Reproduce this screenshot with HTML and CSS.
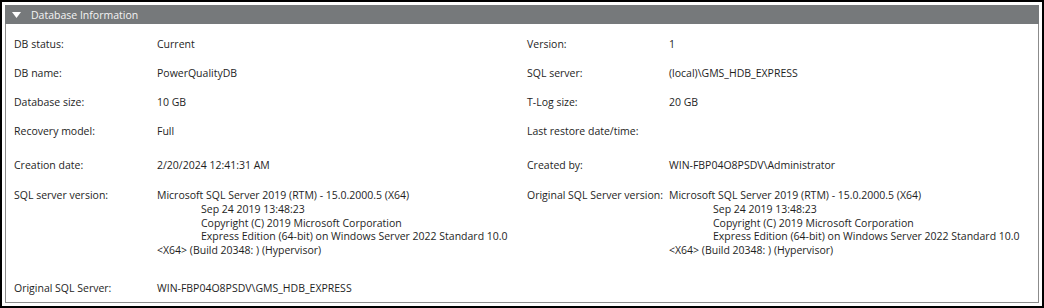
FILE: index.html
```html
<html lang="en">
<head>
    <meta charset="UTF-8">
    <title>Database Information</title>
    <link rel="stylesheet" href="styles.css">
</head>
<body>
    <div class="frame">
        <div class="panel">
            <div class="panel-header">
                <svg class="arrow" width="9" height="6" viewBox="0 0 9 6"><polygon points="0,0 9,0 4.5,6" fill="#ffffff"/></svg>
                <span>Database Information</span>
            </div>
            <div class="info">
                <div class="label">DB status:</div>
                <div class="value">Current</div>
                <div class="label">Version:</div>
                <div class="value">1</div>

                <div class="label">DB name:</div>
                <div class="value">PowerQualityDB</div>
                <div class="label">SQL server:</div>
                <div class="value">(local)\GMS_HDB_EXPRESS</div>

                <div class="label">Database size:</div>
                <div class="value">10 GB</div>
                <div class="label">T-Log size:</div>
                <div class="value">20 GB</div>

                <div class="label">Recovery model:</div>
                <div class="value">Full</div>
                <div class="label">Last restore date/time:</div>
                <div class="value"></div>

                <div class="label">Creation date:</div>
                <div class="value">2/20/2024 12:41:31 AM</div>
                <div class="label">Created by:</div>
                <div class="value">WIN-FBP04O8PSDV\Administrator</div>

                <div class="label">SQL server version:</div>
                <div class="value">
                    <div>Microsoft SQL Server 2019 (RTM) - 15.0.2000.5 (X64)</div>
                    <div class="indent">Sep 24 2019 13:48:23</div>
                    <div class="indent">Copyright (C) 2019 Microsoft Corporation</div>
                    <div class="indent">Express Edition (64-bit) on Windows Server 2022 Standard 10.0</div>
                    <div>&lt;X64&gt; (Build 20348: ) (Hypervisor)</div>
                </div>
                <div class="label">Original SQL Server version:</div>
                <div class="value">
                    <div>Microsoft SQL Server 2019 (RTM) - 15.0.2000.5 (X64)</div>
                    <div class="indent">Sep 24 2019 13:48:23</div>
                    <div class="indent">Copyright (C) 2019 Microsoft Corporation</div>
                    <div class="indent">Express Edition (64-bit) on Windows Server 2022 Standard 10.0</div>
                    <div>&lt;X64&gt; (Build 20348: ) (Hypervisor)</div>
                </div>

                <div class="label">Original SQL Server:</div>
                <div class="value">WIN-FBP04O8PSDV\GMS_HDB_EXPRESS</div>
                <div class="label"></div>
                <div class="value"></div>
            </div>
        </div>
    </div>
</body>
</html>
```

FILE: styles.css
```css
* {
    font-family: "Open Sans", "Noto Sans", sans-serif;
    box-sizing: border-box;
}

body {
    margin: 0;
    background: #ffffff;
}

.frame {
    width: 1044px;
    height: 308px;
    border: 2px solid #000000;
    padding: 3px;
    background: #ffffff;
}

.panel {
    height: 100%;
    border: 1px solid #8c8c8c;
    border-top: none;
}

.panel-header {
    height: 19px;
    margin: 0 -1px;
    background: #76797b;
    color: #f4f4f4;
    font-size: 10.5px;
    display: flex;
    align-items: center;
    padding-left: 7px;
}

.arrow {
    margin-right: 10px;
}

.info {
    display: grid;
    grid-template-columns: 143px 370px 142px 1fr;
    grid-template-rows: 29px 29px 29px 34px 30px 93px auto;
    padding: 14px 8px 0 8px;
    font-size: 10.5px;
    line-height: 13.75px;
    color: #1e1e1e;
    white-space: nowrap;
}

.indent {
    padding-left: 44px;
}
```
